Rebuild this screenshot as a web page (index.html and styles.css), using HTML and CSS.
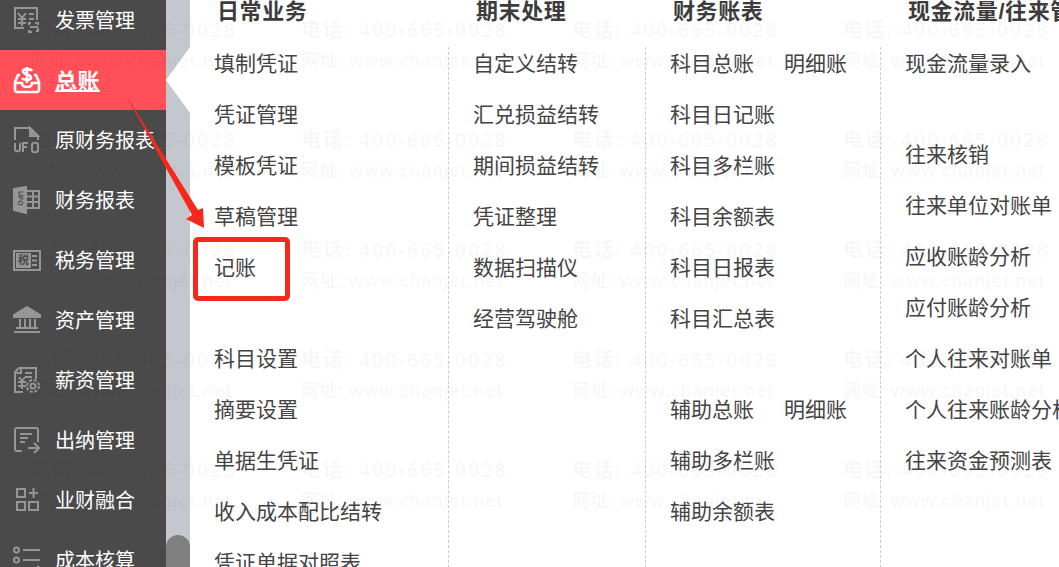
FILE: index.html
```html
<!doctype html>
<html lang="zh">

<head>
    <meta charset="utf-8">
    <title>总账 记账</title>
    <link rel="stylesheet" href="styles.css">
</head>

<body>
    <div class="page">
        <div class="sidebar">
            <div class="nav-item">
                <svg class="icon" viewBox="0 0 28 28"><path d="M11 22H2V2h22v12M5 7l4 5 4-5M5 13h8M5 17h8M9 12v8M16 8h5M16 13h5"/><path d="M16 19v-2h2M22 17h3v2M25 22v3h-2M19 26h-3v-2" /><path d="M17 21h8"/></svg>
                <span>发票管理</span>
            </div>
            <div class="nav-item active">
                <svg class="icon" viewBox="0 0 28 28"><path d="M7 9H5L2 16v8c0 1 1 2 2 2h20c1 0 2-1 2-2v-8l-3-7h-2"/><path d="M2 17h7c0 3 2 4 5 4s5-1 5-4h7"/><path d="M19 5c-1-2-8-3-9 0-1 4 9 3 8 7-1 3-8 2-9 0M14 1v16"/></svg>
                <span>总账</span>
            </div>
            <div class="nav-item">
                <svg class="icon" viewBox="0 0 28 28"><path d="M2 14V2h15l8 8v4"/><path class="fill" d="M17 2l8 8h-8z"/><path d="M2 17v6c0 3 5 3 5 0v-6M10 26v-9h5M10 21h4M19 19c0-3 6-3 6 0v5c0 3-6 3-6 0z"/></svg>
                <span>原财务报表</span>
            </div>
            <div class="nav-item">
                <svg class="icon" viewBox="0 0 28 28"><path class="fill" d="M1 3L13 1V27L1 24z"/><text class="icon-ufo" transform="translate(4.500 5) rotate(90)">UFO</text><path d="M13 5h13v17H13M20 5v17M13 10.500h13M13 16h13"/></svg>
                <span>财务报表</span>
            </div>
            <div class="nav-item">
                <svg class="icon" viewBox="0 0 28 28"><path d="M1 5h26v19H1z"/><path class="fill" d="M4 8h13v13H4z"/><text class="icon-tax" x="5" y="18">税</text><path d="M19 10h5M19 14.500h5M19 19h5"/></svg>
                <span>税务管理</span>
            </div>
            <div class="nav-item">
                <svg class="icon" viewBox="0 0 28 28"><path class="fill" d="M14 1L1 9v2h26V9z"/><path d="M7 13v8M12 13v8M17 13v8M22 13v8M3 22h22M1 26h26"/></svg>
                <span>资产管理</span>
            </div>
            <div class="nav-item">
                <svg class="icon" viewBox="0 0 28 28"><path d="M10 26H2V6l4-4h17v11"/><path d="M8 3v4H3M12 7h7M12 11h7"/><path d="M6 11l3 4 3-4M5 16h8M5 20h8M9 15v8"/><circle cx="20" cy="20" r="2.500"/><circle cx="20" cy="20" r="6" stroke-dasharray="3 1.700"/></svg>
                <span>薪资管理</span>
            </div>
            <div class="nav-item">
                <svg class="icon" viewBox="0 0 28 28"><path d="M9 25H4a2 2 0 0 1-2-2V4a2 2 0 0 1 2-2h19a2 2 0 0 1 2 2v12"/><path d="M7 8h12M7 12h8M7 16h5M15 22h10M21 17l5 5-5 5"/></svg>
                <span>出纳管理</span>
            </div>
            <div class="nav-item">
                <svg class="icon" viewBox="0 0 28 28"><path d="M4 3h8v8H4zM4 16h8v8H4zM16 16h9v8h-9zM16 7h9M20.500 2v10"/></svg>
                <span>业财融合</span>
            </div>
            <div class="nav-item">
                <svg class="icon" viewBox="0 0 28 28"><circle cx="3.500" cy="4" r="2.500"/><circle cx="3.500" cy="14" r="2.500"/><path d="M10 4h17M10 14h17M2 24h7M14 24l4 4 8-8"/></svg>
                <span>成本核算</span>
            </div>
        </div>

        <div class="rail"><div class="thumb"></div></div>

        <div class="menu">
            <div class="col col-1">
                <h3>日常业务</h3>
                <div class="col-body">
                    <div class="group">
                        <div class="row">填制凭证</div>
                        <div class="row">凭证管理</div>
                        <div class="row">模板凭证</div>
                        <div class="row">草稿管理</div>
                        <div class="row">记账</div>
                    </div>
                    <div class="group">
                        <div class="row">科目设置</div>
                        <div class="row">摘要设置</div>
                        <div class="row">单据生凭证</div>
                        <div class="row">收入成本配比结转</div>
                        <div class="row">凭证单据对照表</div>
                    </div>
                </div>
            </div>
            <div class="col col-2">
                <h3>期末处理</h3>
                <div class="col-body">
                    <div class="group">
                        <div class="row">自定义结转</div>
                        <div class="row">汇兑损益结转</div>
                        <div class="row">期间损益结转</div>
                        <div class="row">凭证整理</div>
                        <div class="row">数据扫描仪</div>
                        <div class="row">经营驾驶舱</div>
                    </div>
                </div>
            </div>
            <div class="col col-3">
                <h3>财务账表</h3>
                <div class="col-body">
                    <div class="group">
                        <div class="row"><span class="cell">科目总账</span><span>明细账</span></div>
                        <div class="row">科目日记账</div>
                        <div class="row">科目多栏账</div>
                        <div class="row">科目余额表</div>
                        <div class="row">科目日报表</div>
                        <div class="row">科目汇总表</div>
                    </div>
                    <div class="group">
                        <div class="row"><span class="cell">辅助总账</span><span>明细账</span></div>
                        <div class="row">辅助多栏账</div>
                        <div class="row">辅助余额表</div>
                    </div>
                </div>
            </div>
            <div class="col col-4">
                <h3>现金流量/往来管理</h3>
                <div class="col-body">
                    <div class="group">
                        <div class="row">现金流量录入</div>
                    </div>
                    <div class="group">
                        <div class="row">往来核销</div>
                        <div class="row">往来单位对账单</div>
                        <div class="row">应收账龄分析</div>
                        <div class="row">应付账龄分析</div>
                        <div class="row">个人往来对账单</div>
                        <div class="row">个人往来账龄分析</div>
                        <div class="row">往来资金预测表</div>
                    </div>
                </div>
            </div>
        </div>

        <div class="watermark">
            <div class="mark"><span>电话: 400-665-0028</span><span class="url">网址: www.chanjet.net</span></div>
            <div class="mark"><span>电话: 400-665-0028</span><span class="url">网址: www.chanjet.net</span></div>
            <div class="mark"><span>电话: 400-665-0028</span><span class="url">网址: www.chanjet.net</span></div>
            <div class="mark"><span>电话: 400-665-0028</span><span class="url">网址: www.chanjet.net</span></div>
            <div class="mark"><span>电话: 400-665-0028</span><span class="url">网址: www.chanjet.net</span></div>
            <div class="mark"><span>电话: 400-665-0028</span><span class="url">网址: www.chanjet.net</span></div>
            <div class="mark"><span>电话: 400-665-0028</span><span class="url">网址: www.chanjet.net</span></div>
            <div class="mark"><span>电话: 400-665-0028</span><span class="url">网址: www.chanjet.net</span></div>
            <div class="mark"><span>电话: 400-665-0028</span><span class="url">网址: www.chanjet.net</span></div>
            <div class="mark"><span>电话: 400-665-0028</span><span class="url">网址: www.chanjet.net</span></div>
            <div class="mark"><span>电话: 400-665-0028</span><span class="url">网址: www.chanjet.net</span></div>
            <div class="mark"><span>电话: 400-665-0028</span><span class="url">网址: www.chanjet.net</span></div>
            <div class="mark"><span>电话: 400-665-0028</span><span class="url">网址: www.chanjet.net</span></div>
            <div class="mark"><span>电话: 400-665-0028</span><span class="url">网址: www.chanjet.net</span></div>
            <div class="mark"><span>电话: 400-665-0028</span><span class="url">网址: www.chanjet.net</span></div>
            <div class="mark"><span>电话: 400-665-0028</span><span class="url">网址: www.chanjet.net</span></div>
            <div class="mark"><span>电话: 400-665-0028</span><span class="url">网址: www.chanjet.net</span></div>
            <div class="mark"><span>电话: 400-665-0028</span><span class="url">网址: www.chanjet.net</span></div>
            <div class="mark"><span>电话: 400-665-0028</span><span class="url">网址: www.chanjet.net</span></div>
            <div class="mark"><span>电话: 400-665-0028</span><span class="url">网址: www.chanjet.net</span></div>
        </div>

        <!-- annotation drawn on top of the screenshot -->
        <svg class="arrow" viewBox="0 0 100 150">
            <path d="M4 2L72 125L66 129L84 138L83 118L78 120z"/>
        </svg>
        <div class="callout"></div>
    </div>
</body>

</html>
```

FILE: styles.css
```css
html,
body {
    height: 100%;
    width: 100%;
    background: white;
    padding: 0;
    margin: 0;
    overflow: hidden;
    font-family: "Liberation Sans", "Noto Sans CJK SC", sans-serif;
}

.page {
    height: 567px;
    display: flex;
    position: relative;
    overflow: hidden;
}

.sidebar {
    width: 166px;
    flex: none;
    margin-top: -10px;
    background: #4a4a4a;
    color: #fff;
}

.nav-item {
    height: 60px;
    display: flex;
    align-items: center;
    gap: 14px;
    padding-left: 13px;
    font-size: 20px;
    white-space: nowrap;
    position: relative;
}

.nav-item span {
    padding-bottom: 2px;
}

.nav-item .icon {
    width: 28px;
    height: 28px;
    flex: none;
    fill: none;
    stroke: #969696;
    stroke-width: 2;
}

.nav-item .icon .fill {
    fill: #969696;
}

.nav-item .icon text {
    stroke: none;
    fill: #4a4a4a;
    font-weight: bold;
}

.icon-ufo {
    font-size: 7px;
}

.icon-tax {
    font-size: 11px;
}

.nav-item.active {
    background: #ff4f58;
    font-size: 22px;
    letter-spacing: 0.5px;
    font-weight: bold;
}

.nav-item.active span {
    text-decoration: underline;
    text-decoration-thickness: 2px;
}

.nav-item.active .icon {
    stroke: #fff;
    stroke-width: 2.6;
}

.nav-item.active::after {
    content: "";
    position: absolute;
    left: 166px;
    top: -3px;
    border-style: solid;
    border-width: 33px 24px 33px 0;
    border-color: transparent #fff transparent transparent;
}

.rail {
    width: 24px;
    flex: none;
    background: #c4c8ce;
    display: flex;
    flex-direction: column;
    justify-content: flex-end;
}

.thumb {
    height: 32px;
    background: #808080;
    border-radius: 12px 12px 0 0;
}

.menu {
    flex: 1;
    display: flex;
    color: #444;
    font-size: 21px;
    white-space: nowrap;
    min-width: 0;
}

.col h3 {
    margin: 0;
    height: 47px;
    line-height: 24px;
    padding-left: 28px;
    font-size: 22px;
    letter-spacing: 0.6px;
    font-weight: bold;
    color: #3c3c3c;
}

.col-body {
    height: 520px;
    padding-top: 1px;
    padding-left: 24px;
    border-left: 1px dashed #ccc;
}

.col-1 {
    width: 258px;
}

.col-1 h3 {
    padding-left: 27px;
}

.col-1 .col-body {
    border-left: 0;
}

.col-2 {
    width: 197px;
}

.col-3 {
    width: 235px;
}

.col-4 {
    flex: 1;
    overflow: hidden;
}

.group {
    padding-bottom: 40px;
}

.row {
    height: 32px;
    line-height: 32px;
    margin-bottom: 19px;
    display: flex;
}

.row .cell {
    width: 114px;
}

.watermark {
    position: absolute;
    left: 30px;
    top: 15px;
    width: 1100px;
    display: flex;
    flex-wrap: wrap;
    pointer-events: none;
}

.mark {
    width: 271px;
    height: 110px;
    display: flex;
    flex-direction: column;
    font-family: "Open Sans", "Noto Sans CJK SC", sans-serif;
    font-size: 20px;
    font-weight: 600;
    line-height: 30px;
    letter-spacing: 1.8px;
    color: rgba(20, 30, 60, 0.045);
    white-space: nowrap;
}

.mark .url {
    font-size: 18px;
    letter-spacing: 0.5px;
}

.arrow {
    position: absolute;
    left: 120px;
    top: 90px;
    width: 100px;
    height: 150px;
    fill: #f5281e;
}

.callout {
    position: absolute;
    left: 193px;
    top: 237px;
    width: 87px;
    height: 54px;
    border: 5px solid #f5281e;
    border-radius: 5px;
}
```
